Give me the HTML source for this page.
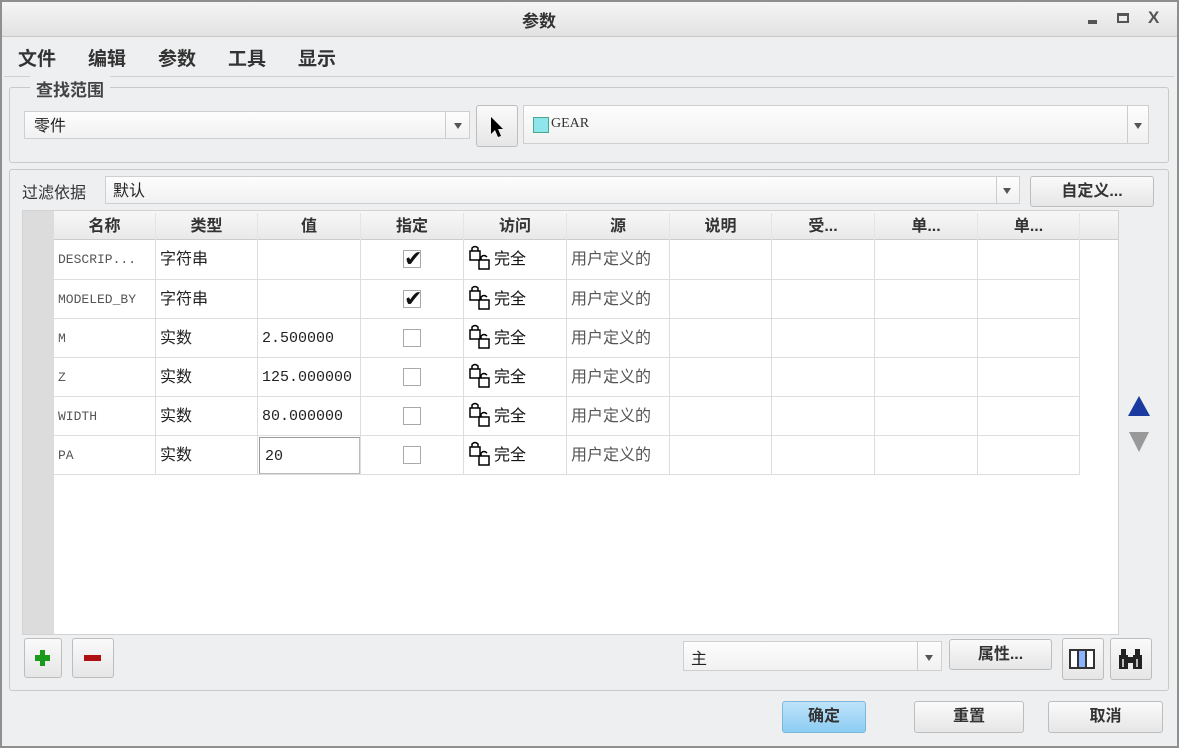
<!DOCTYPE html>
<html><head><meta charset="utf-8"><style>
*{box-sizing:border-box;margin:0;padding:0}
body{width:1179px;height:748px;overflow:hidden;background:#8f8f8f;font-family:"Liberation Sans","Noto Sans CJK SC",sans-serif;position:relative}
.a{position:absolute}
#win{left:2px;top:2px;width:1175px;height:744px;background:#eeeff0}
.title{left:2px;top:2px;width:1175px;height:35px;background:linear-gradient(#f5f5f5,#e2e2e2);border-bottom:1px solid #c8c8c8}
.b{font-weight:bold}
.box{border:1px solid #c9c9c9;border-radius:3px}
.field{background:linear-gradient(#fdfdfd,#f1f1f1);border:1px solid #cfcfcf}
.btn{background:linear-gradient(#fafafa,#e6e6e6);border:1px solid #bdbdbd;border-radius:3px;text-align:center;font-weight:bold;font-size:16px;color:#333}
.dd{width:0;height:0;border-left:4px solid transparent;border-right:4px solid transparent;border-top:6px solid #555}
.cell{position:absolute;border-right:1px solid #ddd;border-bottom:1px solid #ddd;font-size:16px;color:#222;line-height:38px;padding-left:4px;white-space:nowrap;overflow:hidden}
.mono{font-family:"Liberation Mono",monospace;font-size:13px;color:#555}
.hd{position:absolute;top:213px;height:27px;line-height:27px;text-align:center;font-weight:bold;font-size:16px;color:#333;border-right:1px solid #e4e4e4}
.cb{position:absolute;width:18px;height:18px;border:1px solid #aaa;background:#fff}
.menu{position:absolute;top:44px;font-size:19px;font-weight:bold;color:#333}
</style></head><body>
<div id="win" class="a"></div>
<div class="title a"></div>
<div class="a b" style="left:522px;top:7px;font-size:17px;color:#333">参数</div>
<div class="a" style="left:1088px;top:20px;width:9px;height:4px;background:#555"></div>
<div class="a" style="left:1117px;top:13px;width:12px;height:10px;border:2px solid #555;border-top-width:3px"></div>
<div class="a b" style="left:1148px;top:8px;font-size:17px;color:#555">X</div>
<div class="a" style="left:4px;top:37px;width:1170px;height:40px;border-bottom:1px solid #cfcfcf"></div>
<div class="menu" style="left:18px">文件</div>
<div class="menu" style="left:88px">编辑</div>
<div class="menu" style="left:158px">参数</div>
<div class="menu" style="left:228px">工具</div>
<div class="menu" style="left:298px">显示</div>

<div class="a box" style="left:9px;top:87px;width:1160px;height:76px"></div>
<div class="a b" style="left:30px;top:76px;font-size:17px;color:#444;background:#eeeff0;padding:0 6px">查找范围</div>
<div class="a field" style="left:24px;top:111px;width:446px;height:28px"></div>
<div class="a" style="left:34px;top:112px;font-size:16px;color:#222">零件</div>
<div class="a" style="left:445px;top:112px;width:1px;height:26px;background:#ccc"></div>
<div class="a dd" style="left:454px;top:123px"></div>
<div class="a btn" style="left:476px;top:105px;width:42px;height:42px"></div>
<svg class="a" style="left:488px;top:115px" width="18" height="24" viewBox="0 0 18 24"><path d="M3 2 L3 19 L7 15 L10 22 L13 21 L10 14 L15 14 Z" fill="#000"/></svg>
<div class="a field" style="left:523px;top:105px;width:626px;height:39px"></div>
<div class="a" style="left:533px;top:117px;width:16px;height:16px;background:#8ee6ec;border:1px solid #4a8"></div>
<div class="a" style="left:551px;top:116px;color:#333;font-family:'Liberation Serif',serif;font-size:14px">GEAR</div>
<div class="a" style="left:1127px;top:106px;width:1px;height:37px;background:#ccc"></div>
<div class="a dd" style="left:1134px;top:123px"></div>

<div class="a box" style="left:9px;top:169px;width:1160px;height:522px"></div>
<div class="a" style="left:22px;top:179px;font-size:16px;color:#333">过滤依据</div>
<div class="a field" style="left:105px;top:176px;width:915px;height:28px"></div>
<div class="a" style="left:113px;top:177px;font-size:16px;color:#222">默认</div>
<div class="a" style="left:996px;top:177px;width:1px;height:26px;background:#ccc"></div>
<div class="a dd" style="left:1003px;top:188px"></div>
<div class="a btn" style="left:1030px;top:176px;width:124px;height:31px;line-height:29px">自定义...</div>

<div class="a" style="left:22px;top:210px;width:1097px;height:425px;background:#fff;border:1px solid #d2d2d2"></div>
<div class="a" style="left:23px;top:211px;width:1095px;height:29px;background:linear-gradient(#f7f7f7,#e9e9e9);border-bottom:1px solid #ccc"></div>
<div class="a" style="left:23px;top:211px;width:31px;height:423px;background:#dcdcdc"></div>
<div class="hd" style="left:54px;width:102px">名称</div>
<div class="hd" style="left:156px;width:102px">类型</div>
<div class="hd" style="left:258px;width:103px">值</div>
<div class="hd" style="left:361px;width:103px">指定</div>
<div class="hd" style="left:464px;width:103px">访问</div>
<div class="hd" style="left:567px;width:103px">源</div>
<div class="hd" style="left:670px;width:102px">说明</div>
<div class="hd" style="left:772px;width:103px">受...</div>
<div class="hd" style="left:875px;width:103px">单...</div>
<div class="hd" style="left:978px;width:102px">单...</div>

<div id="rows"></div>
<script>
var rows=[["DESCRIP...","字符串","",1],["MODELED_BY","字符串","",1],["M","实数","2.500000",0],["Z","实数","125.000000",0],["WIDTH","实数","80.000000",0],["PA","实数","20",0]];
var ys=[240,280,319,358,397,436,475],h='';
var cols=[54,156,258,361,464,567,670,772,875,978,1080];
var lock='<svg width="30" height="30" viewBox="0 0 30 30" style="position:absolute;left:4px;top:5px"><rect x="2" y="6" width="10" height="9" fill="#fff" stroke="#000" stroke-width="1.5"/><path d="M4 6 V3 Q7 0 10 3 V6" fill="none" stroke="#000" stroke-width="1.5"/><rect x="11" y="15" width="10" height="9" fill="#fff" stroke="#000" stroke-width="1.5"/><path d="M13 15 V12 Q16 9 19 12" fill="none" stroke="#000" stroke-width="1.5"/></svg>';
for(var i=0;i<6;i++){var y=ys[i],hh=ys[i+1]-y,r=rows[i];
for(var c=0;c<10;c++){var x=cols[c],w=cols[c+1]-x,t='',cls='cell',st='';
if(c==0){t=r[0];cls+=' mono';}
if(c==1)t=r[1];
if(c==2){t=r[2];st='font-family:Liberation Mono,monospace;font-size:15px;';}
if(c==3){t='<div class="cb" style="left:42px;top:10px">'+(r[3]?'<span style="position:absolute;left:0;top:-12px;font-size:22px;color:#111">✔</span>':'')+'</div>';}
if(c==4){t=lock+'<span style="position:absolute;left:30px;top:0;color:#111">完全</span>';}
if(c==5){t='用户定义的';st='color:#555;';}
h+='<div class="'+cls+'" style="left:'+x+'px;top:'+y+'px;width:'+w+'px;height:'+hh+'px;line-height:'+hh+'px;'+st+'">'+t+'</div>';}}
h+='<div class="a" style="left:259px;top:437px;width:101px;height:37px;border:1px solid #999;border-color:#999 #bbb #bbb #999;background:#fff;font-family:Liberation Mono,monospace;font-size:15px;line-height:37px;padding-left:5px;color:#222">20</div>';
document.getElementById('rows').innerHTML=h;
</script>
<div class="a" style="left:1128px;top:396px;width:0;height:0;border-left:11px solid transparent;border-right:11px solid transparent;border-bottom:20px solid #1a3aa0"></div>
<div class="a" style="left:1129px;top:432px;width:0;height:0;border-left:10px solid transparent;border-right:10px solid transparent;border-top:20px solid #999"></div>

<div class="a btn" style="left:24px;top:638px;width:38px;height:40px"></div>
<div class="a" style="left:40px;top:650px;width:5px;height:16px;background:#1a9a1a"></div>
<div class="a" style="left:35px;top:655px;width:15px;height:6px;background:#1a9a1a"></div>
<div class="a btn" style="left:72px;top:638px;width:42px;height:40px"></div>
<div class="a" style="left:84px;top:655px;width:17px;height:6px;background:#b01010"></div>
<div class="a field" style="left:683px;top:641px;width:259px;height:30px"></div>
<div class="a" style="left:691px;top:645px;font-size:16px;color:#222">主</div>
<div class="a" style="left:917px;top:642px;width:1px;height:28px;background:#ccc"></div>
<div class="a dd" style="left:925px;top:655px"></div>
<div class="a btn" style="left:949px;top:639px;width:103px;height:31px;line-height:29px">属性...</div>
<div class="a btn" style="left:1062px;top:638px;width:42px;height:42px"></div>
<div class="a" style="left:1069px;top:649px;width:26px;height:20px;border:2px solid #333;background:linear-gradient(90deg,#fff 0 6px,#333 6px 8px,#8ab4ff 8px 14px,#333 14px 16px,#fff 16px)"></div>
<div class="a btn" style="left:1110px;top:638px;width:42px;height:42px"></div>
<svg class="a" style="left:1117px;top:647px" width="28" height="24" viewBox="0 0 28 24"><path d="M2 8 H11 V22 H2 Z M16 8 H25 V22 H16 Z M10 10 H17 V16 H10 Z M4 2 H9 V8 H4 Z M18 2 H23 V8 H18 Z" fill="#222"/><rect x="5" y="12" width="2" height="8" fill="#bbb"/><rect x="19" y="12" width="2" height="8" fill="#bbb"/></svg>

<div class="a" style="left:782px;top:701px;width:84px;height:32px;border:1px solid #7bb8dc;border-radius:3px;background:linear-gradient(#bfe3fa,#8ccdf3);text-align:center;line-height:30px;font-weight:bold;font-size:16px;color:#333">确定</div>
<div class="a btn" style="left:914px;top:701px;width:110px;height:32px;line-height:30px">重置</div>
<div class="a btn" style="left:1048px;top:701px;width:115px;height:32px;line-height:30px">取消</div>
</body></html>
